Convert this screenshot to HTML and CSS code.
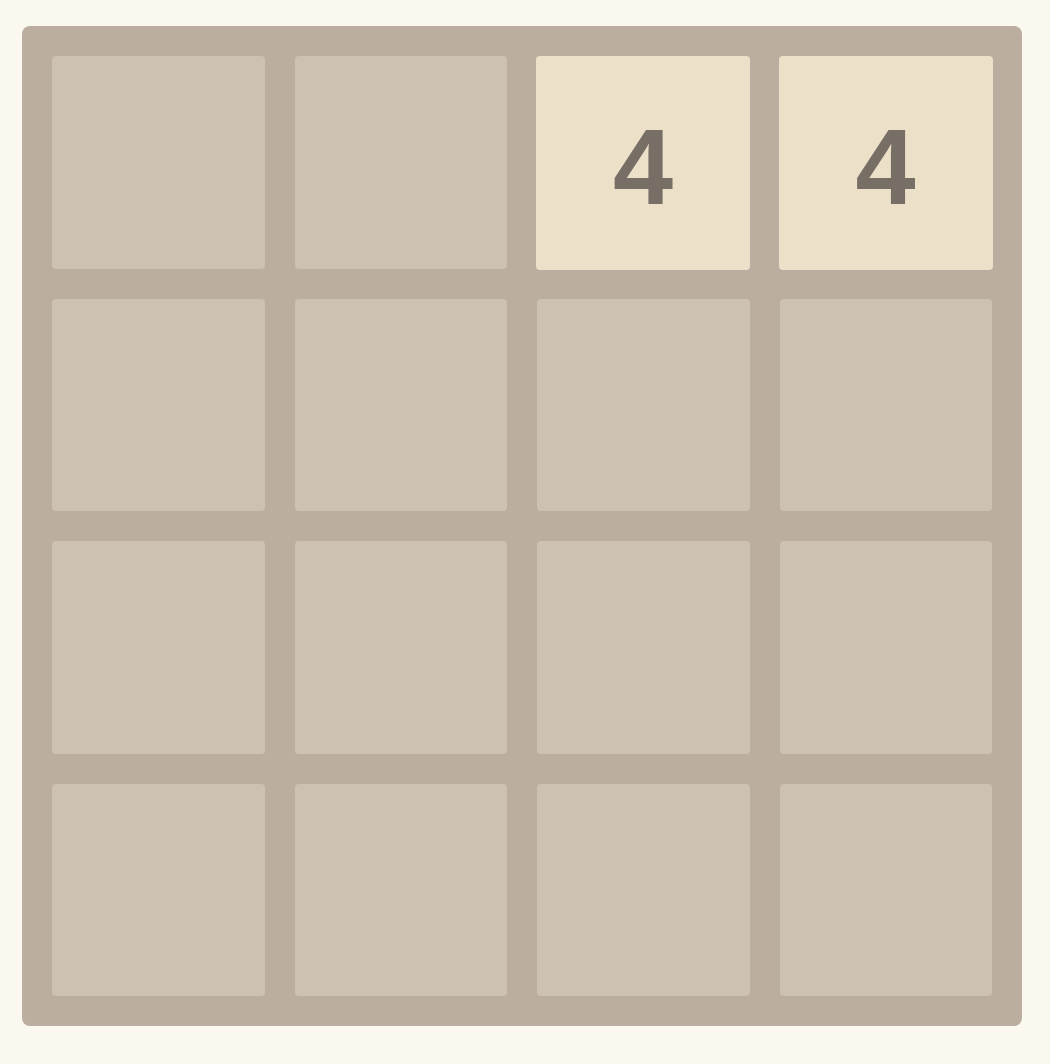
FILE: index.html
```html
<!DOCTYPE html>
<html>

<head>
    <meta charset="UTF-8">
    <title>2048</title>
    <link rel="stylesheet" href="styles.css">
</head>

<body>
    <div class="game-container">
        <!-- Linha 1 -->
        <div class="grid-cell"></div>
        <div class="grid-cell"></div>
        <div class="grid-cell"><div class="tile tile-4">4</div></div>
        <div class="grid-cell"><div class="tile tile-4">4</div></div>

        <!-- Linha 2 -->
        <div class="grid-cell"></div>
        <div class="grid-cell"></div>
        <div class="grid-cell"></div>
        <div class="grid-cell"></div>

        <!-- Linha 3 -->
        <div class="grid-cell"></div>
        <div class="grid-cell"></div>
        <div class="grid-cell"></div>
        <div class="grid-cell"></div>

        <!-- Linha 4 -->
        <div class="grid-cell"></div>
        <div class="grid-cell"></div>
        <div class="grid-cell"></div>
        <div class="grid-cell"></div>
    </div>
</body>

</html>
```

FILE: styles.css
```css
body {
    font-family: "Liberation Sans", Arial, sans-serif;
    background-color: #faf8ef;
    margin: 0;
    padding: 26px 0 0 22px;
}

.game-container {
    width: 1000px;
    height: 1000px;
    box-sizing: border-box;
    padding: 30px;
    background-color: #bbada0;
    border-radius: 8px;
    display: grid;
    grid-template-columns: repeat(4, 1fr);
    grid-template-rows: repeat(4, 1fr);
    gap: 30px;
}

.grid-cell {
    position: relative;
    background-color: #cdc1b4;
    border-radius: 4px;
}

.tile {
    position: absolute;
    left: -1px;
    top: 0;
    width: 214px;
    height: 214px;
    box-sizing: border-box;
    padding-top: 6px;
    border-radius: 4px;
    display: flex;
    align-items: center;
    justify-content: center;
    font-weight: bold;
    font-size: 108px;
    color: #776e65;
}

.tile-4 {
    background-color: #ede0c8;
}
```
